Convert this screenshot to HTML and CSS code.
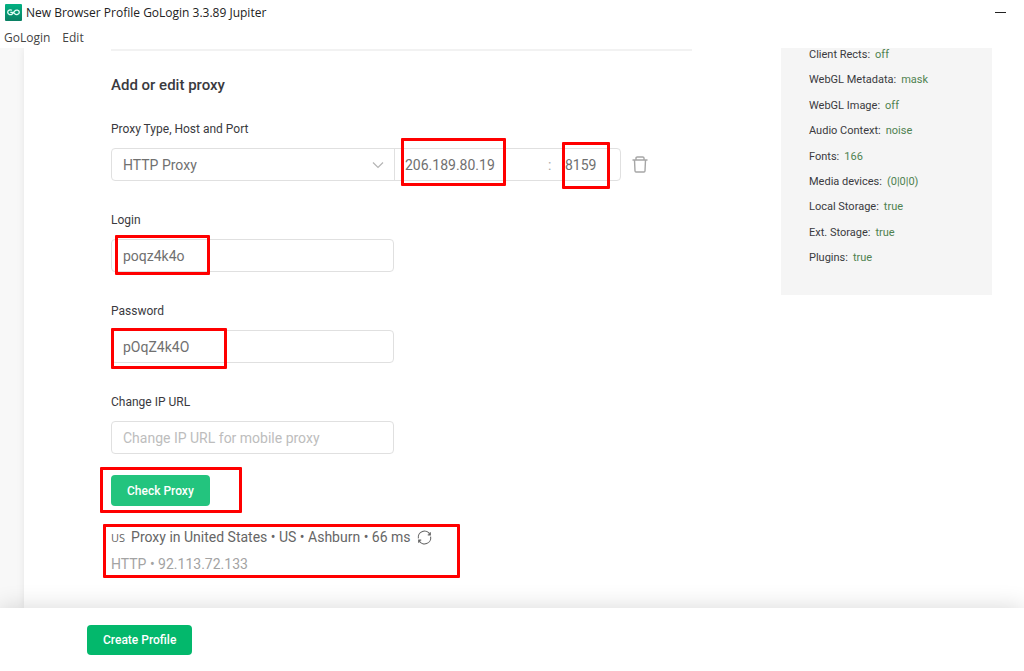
FILE: index.html
```html
<!DOCTYPE html>
<html lang="en">
<head>
<meta charset="utf-8">
<title>New Browser Profile GoLogin 3.3.89 Jupiter</title>
<link rel="stylesheet" href="styles.css">
</head>
<body>
<header class="window-bar">
  <div class="title-row">
    <svg class="logo" viewBox="0 0 17 17" aria-hidden="true">
      <defs><linearGradient id="g" x1="0" y1="0" x2="0" y2="1"><stop offset="0" stop-color="#02b283"/><stop offset="1" stop-color="#0b7f63"/></linearGradient></defs>
      <rect width="17" height="17" rx="1" fill="url(#g)"/>
      <path d="M7 6.3C5.200 5.300 2.700 6 2.700 8.300s3.200 3.200 4.800 1.400L9.600 7.200c1.600-1.900 4.700-1.100 4.700 1.100s-3.100 3.200-4.700 1.300L8.800 8.700M5.300 8.300h2.500" fill="none" stroke="#e8fff7" stroke-width="1.300"/>
    </svg>
    <span class="window-title">New Browser Profile GoLogin 3.3.89 Jupiter</span>
    <button class="minimize" type="button" aria-label="Minimize"><span></span></button>
  </div>
  <nav class="menu">
    <a href="#gologin">GoLogin</a>
    <a href="#edit">Edit</a>
  </nav>
</header>

<main class="workspace">
  <div class="card">
    <form class="proxy-form" id="proxy-form">
      <h2>Add or edit proxy</h2>

      <div class="field">
        <label for="type">Proxy Type, Host and Port</label>
        <div class="proxy-row">
          <div class="proxy-group">
            <div class="select-wrap">
              <select id="type"><option>HTTP Proxy</option></select>
              <svg class="chevron" viewBox="0 0 12 8" aria-hidden="true"><path d="M1 1.500l5 5 5-5" fill="none" stroke="#b5b5b5" stroke-width="1.200"/></svg>
            </div>
            <input class="host" type="text" aria-label="Host" value="206.189.80.19">
            <span class="colon">:</span>
            <input class="port" type="text" aria-label="Port" value="8159">
            <span class="mark mark-host"></span>
            <span class="mark mark-port"></span>
          </div>
          <button class="trash" type="button" aria-label="Delete proxy">
            <svg viewBox="0 0 16 17" aria-hidden="true"><path d="M.5 4h15M4 4V2.100Q4 1 5.300 1h5.400Q12 1 12 2.100V4M2.500 4l.5 11q.1 1 1 1h8q.9 0 1-1l.5-11" fill="none" stroke="#a6a6a6" stroke-width="1.400"/></svg>
          </button>
        </div>
      </div>

      <div class="field">
        <label for="login">Login</label>
        <div class="box">
          <input id="login" type="text" value="poqz4k4o">
          <span class="mark mark-login"></span>
        </div>
      </div>

      <div class="field">
        <label for="password">Password</label>
        <div class="box">
          <input id="password" type="text" value="pOqZ4k4O">
          <span class="mark mark-password"></span>
        </div>
      </div>

      <div class="field">
        <label for="url">Change IP URL</label>
        <div class="box">
          <input id="url" type="text" placeholder="Change IP URL for mobile proxy">
        </div>
      </div>

      <div class="check">
        <button class="btn btn-check" type="button">Check Proxy</button>
        <span class="mark mark-check"></span>
      </div>

      <div class="result">
        <p class="result-main"><small>US</small><span>Proxy in United States • US • Ashburn • 66 ms</span>
          <svg class="refresh" viewBox="0 0 16 16" aria-hidden="true"><path d="M1.500 9A6.500 6.500 0 0 1 13.700 4.800M14.500 7A6.500 6.500 0 0 1 2.300 11.200M14.200 2.500v2.700h-2.700M1.800 13.500v-2.700h2.700" fill="none" stroke="#666" stroke-width="1.200"/></svg>
        </p>
        <p class="result-sub">HTTP • 92.113.72.133</p>
        <span class="mark mark-result"></span>
      </div>
    </form>

    <aside class="summary">
      <dl>
        <div><dt>Client Rects:</dt><dd>off</dd></div>
        <div><dt>WebGL Metadata:</dt><dd>mask</dd></div>
        <div><dt>WebGL Image:</dt><dd>off</dd></div>
        <div><dt>Audio Context:</dt><dd>noise</dd></div>
        <div><dt>Fonts:</dt><dd>166</dd></div>
        <div><dt>Media devices:</dt><dd>(0|0|0)</dd></div>
        <div><dt>Local Storage:</dt><dd>true</dd></div>
        <div><dt>Ext. Storage:</dt><dd>true</dd></div>
        <div><dt>Plugins:</dt><dd>true</dd></div>
      </dl>
    </aside>
  </div>
</main>

<footer class="actions">
  <button class="btn btn-create" type="submit" form="proxy-form">Create Profile</button>
</footer>
</body>
</html>
```
FILE: styles.css
```css
* { box-sizing: border-box; }

body {
  margin: 0;
  height: 100vh;
  display: flex;
  flex-direction: column;
  overflow: hidden;
  background: #fff;
  color: #3a3a3e;
  font-family: Roboto, "Liberation Sans", sans-serif;
  font-size: 12px;
}

button, input, select { font: inherit; }

/* Window chrome */
.window-bar {
  flex: none;
  font-family: "Open Sans", "Noto Sans", sans-serif;
  font-size: 12px;
}

.title-row {
  display: flex;
  align-items: center;
  gap: 4px;
  height: 25px;
  padding: 0 18px 0 5px;
  color: #222;
}

.logo { width: 17px; height: 17px; }

.minimize {
  margin-left: auto;
  padding: 8px 0;
  border: 0;
  background: none;
}

.minimize span {
  display: block;
  width: 11px;
  height: 1px;
  background: #222;
}

.menu {
  display: flex;
  gap: 12px;
  height: 23px;
  padding-left: 4px;
  line-height: 26px;
}

.menu a { color: #444; text-decoration: none; }

/* Page body */
.workspace {
  flex: 1;
  min-height: 0;
  display: flex;
  padding-left: 24px;
  background: #f8f8f8;
  overflow: hidden;
}

.card {
  flex: 1;
  min-width: 0;
  display: flex;
  align-items: flex-start;
  gap: 89px;
  padding: 0 32px 0 87px;
  background: #fff;
  box-shadow: 0 0 8px rgba(0, 0, 0, 0.08);
}

.proxy-form {
  flex: 1;
  min-width: 0;
  margin-top: 1px;
  border-top: 2px solid #f2f2f2;
}

h2 {
  margin: 24px 0;
  font-size: 15px;
  line-height: 20px;
  font-weight: 500;
}

.field { margin-bottom: 29px; }

.field label {
  display: block;
  margin-bottom: 9px;
  line-height: 20px;
}

.proxy-row { display: flex; align-items: center; gap: 11px; }

.proxy-group, .box {
  position: relative;
  display: flex;
  align-items: center;
  height: 33px;
  border: 1px solid #e0e0e0;
  border-radius: 4px;
  color: #777;
  font-size: 14px;
}

.proxy-group { flex: 0 1 510px; min-width: 0; }

.box { max-width: 283px; }

.box input, .proxy-group input, select {
  min-width: 0;
  border: 0;
  outline: 0;
  background: transparent;
  color: #707070;
  padding: 0;
}

.box input { flex: 1; height: 31px; padding: 0 11px; }

.box input::placeholder { color: #bdbdbd; opacity: 1; }

.select-wrap {
  position: relative;
  flex: 0 0 283px;
  border-right: 1px solid #e0e0e0;
}

select {
  width: 100%;
  height: 31px;
  padding-left: 11px;
  appearance: none;
}

.chevron {
  position: absolute;
  right: 10px;
  top: 12px;
  width: 12px;
  height: 8px;
  pointer-events: none;
}

.proxy-group .host { flex: 0 0 143px; margin-left: 10px; }

.colon { flex: 0 0 17px; color: #aaa; }

.proxy-group .port { flex: 1; width: 0; }

.trash {
  padding: 0;
  border: 0;
  background: none;
  line-height: 0;
}

.trash svg { width: 16px; height: 17px; }

/* Buttons */
.btn {
  display: block;
  border: 0;
  border-radius: 4px;
  padding: 0 16px;
  color: #fff;
  font-size: 12px;
  font-weight: 500;
}

.btn-check { height: 31px; background: #23c47e; }

.btn-create { height: 30px; background: #03b86c; }

.check { position: relative; margin-top: -8px; }

/* Check result */
.result {
  position: relative;
  margin-top: 18px;
  font-size: 14px;
  color: #666;
}

.result p { margin: 0; line-height: 27px; }

.result-main { display: flex; align-items: center; gap: 6px; }

.result-main small { font-family: "Open Sans", sans-serif; font-size: 11px; }

.result .result-sub { color: #a3a3a3; }

.refresh { width: 15px; height: 15px; }

/* Red highlight frames laid over the form */
.mark {
  position: absolute;
  border: 3px solid #f00;
  border-radius: 1px;
  pointer-events: none;
}

.mark-host { left: 289px; top: -11px; width: 105px; height: 48px; }
.mark-port { left: 450px; top: -7px; width: 48px; height: 47px; }
.mark-login { left: 3px; top: -5px; width: 95px; height: 40px; }
.mark-password { left: -1px; top: -3px; width: 116px; height: 41px; }
.mark-check { left: -11px; top: -8px; width: 142px; height: 46px; }
.mark-result { left: -8px; top: 0; width: 357px; height: 54px; }

/* Fingerprint summary */
.summary {
  flex: 0 0 211px;
  padding: 0 28px 27px;
  background: #f5f5f5;
  font-size: 11px;
}

.summary dl {
  margin: -3px 0 0;
  display: flex;
  flex-direction: column;
  justify-content: space-between;
  min-height: 223px;
}

.summary dl div { display: flex; gap: 5px; line-height: 20px; }

.summary dt, .summary dd { margin: 0; }

.summary dd { color: #4f8250; }

/* Footer */
.actions {
  position: relative;
  flex: none;
  height: 63px;
  padding: 17px 87px;
  background: #fff;
  box-shadow: 0 0 24px rgba(0, 0, 0, 0.16);
}
```
